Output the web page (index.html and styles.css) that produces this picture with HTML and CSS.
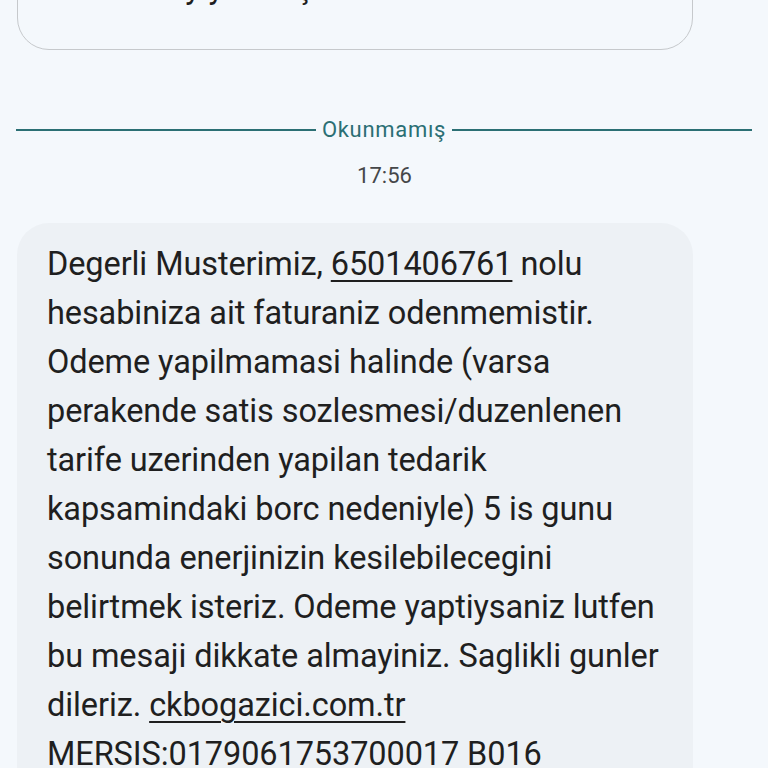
FILE: index.html
```html
<!DOCTYPE html>
<html lang="tr">
<head>
<meta charset="utf-8">
<link rel="stylesheet" href="styles.css">
</head>
<body>
<div class="thread">
  <div class="card-out">
    <p class="msg-text">Hem de ay yanmış</p>
  </div>
  <div class="divider">
    <span class="rule"></span>
    <span class="divider-label">Okunmamış</span>
    <span class="rule"></span>
  </div>
  <div class="time">17:56</div>
  <div class="bubble">
    <p class="msg-text">Degerli Musterimiz, <span class="link">6501406761</span> nolu<br>hesabiniza ait faturaniz odenmemistir.<br>Odeme yapilmamasi halinde (varsa<br>perakende satis sozlesmesi/duzenlenen<br>tarife uzerinden yapilan tedarik<br>kapsamindaki borc nedeniyle) 5 is gunu<br>sonunda enerjinizin kesilebilecegini<br>belirtmek isteriz. Odeme yaptiysaniz lutfen<br>bu mesaji dikkate almayiniz. Saglikli gunler<br>dileriz. <span class="link">ckbogazici.com.tr</span><br>MERSIS:0179061753700017 B016</p>
  </div>
</div>
</body>
</html>
```

FILE: styles.css
```css
html, body {
  margin: 0;
  padding: 0;
  background: #f4f8fc;
  overflow: hidden;
}
body {
  font-family: Roboto, "Noto Sans", sans-serif;
  color: #1f1f1f;
}
.thread {
  display: flex;
  flex-direction: column;
  padding: 0 16px 0 17px;
  margin-top: -60px;
}
.card-out {
  width: 676px;
  box-sizing: border-box;
  border: 1.5px solid #c6c9cc;
  border-radius: 32px;
  padding: 22px 20px 37px 30px;
}
.msg-text {
  margin: 0;
  font-size: 32.5px;
  line-height: 49px;
  letter-spacing: -0.1px;
  white-space: nowrap;
}
.divider {
  display: flex;
  align-items: center;
  gap: 6px;
  margin-top: 68px;
  margin-left: -1px;
  height: 24px;
}
.rule {
  flex: 1;
  height: 2px;
  background: #2b6f74;
}
.divider-label {
  font-size: 22px;
  letter-spacing: 0.7px;
  color: #2b6f74;
  line-height: 24px;
}
.time {
  text-align: center;
  font-size: 22px;
  line-height: 24px;
  color: #454749;
  margin-top: 22px;
}
.bubble {
  width: 676px;
  box-sizing: border-box;
  margin-top: 35px;
  background: #edf1f5;
  border-radius: 32px;
  padding: 17px 20px 20px 30px;
}
.link {
  text-decoration: underline;
  text-decoration-thickness: 2px;
  text-underline-offset: 5px;
}
```
